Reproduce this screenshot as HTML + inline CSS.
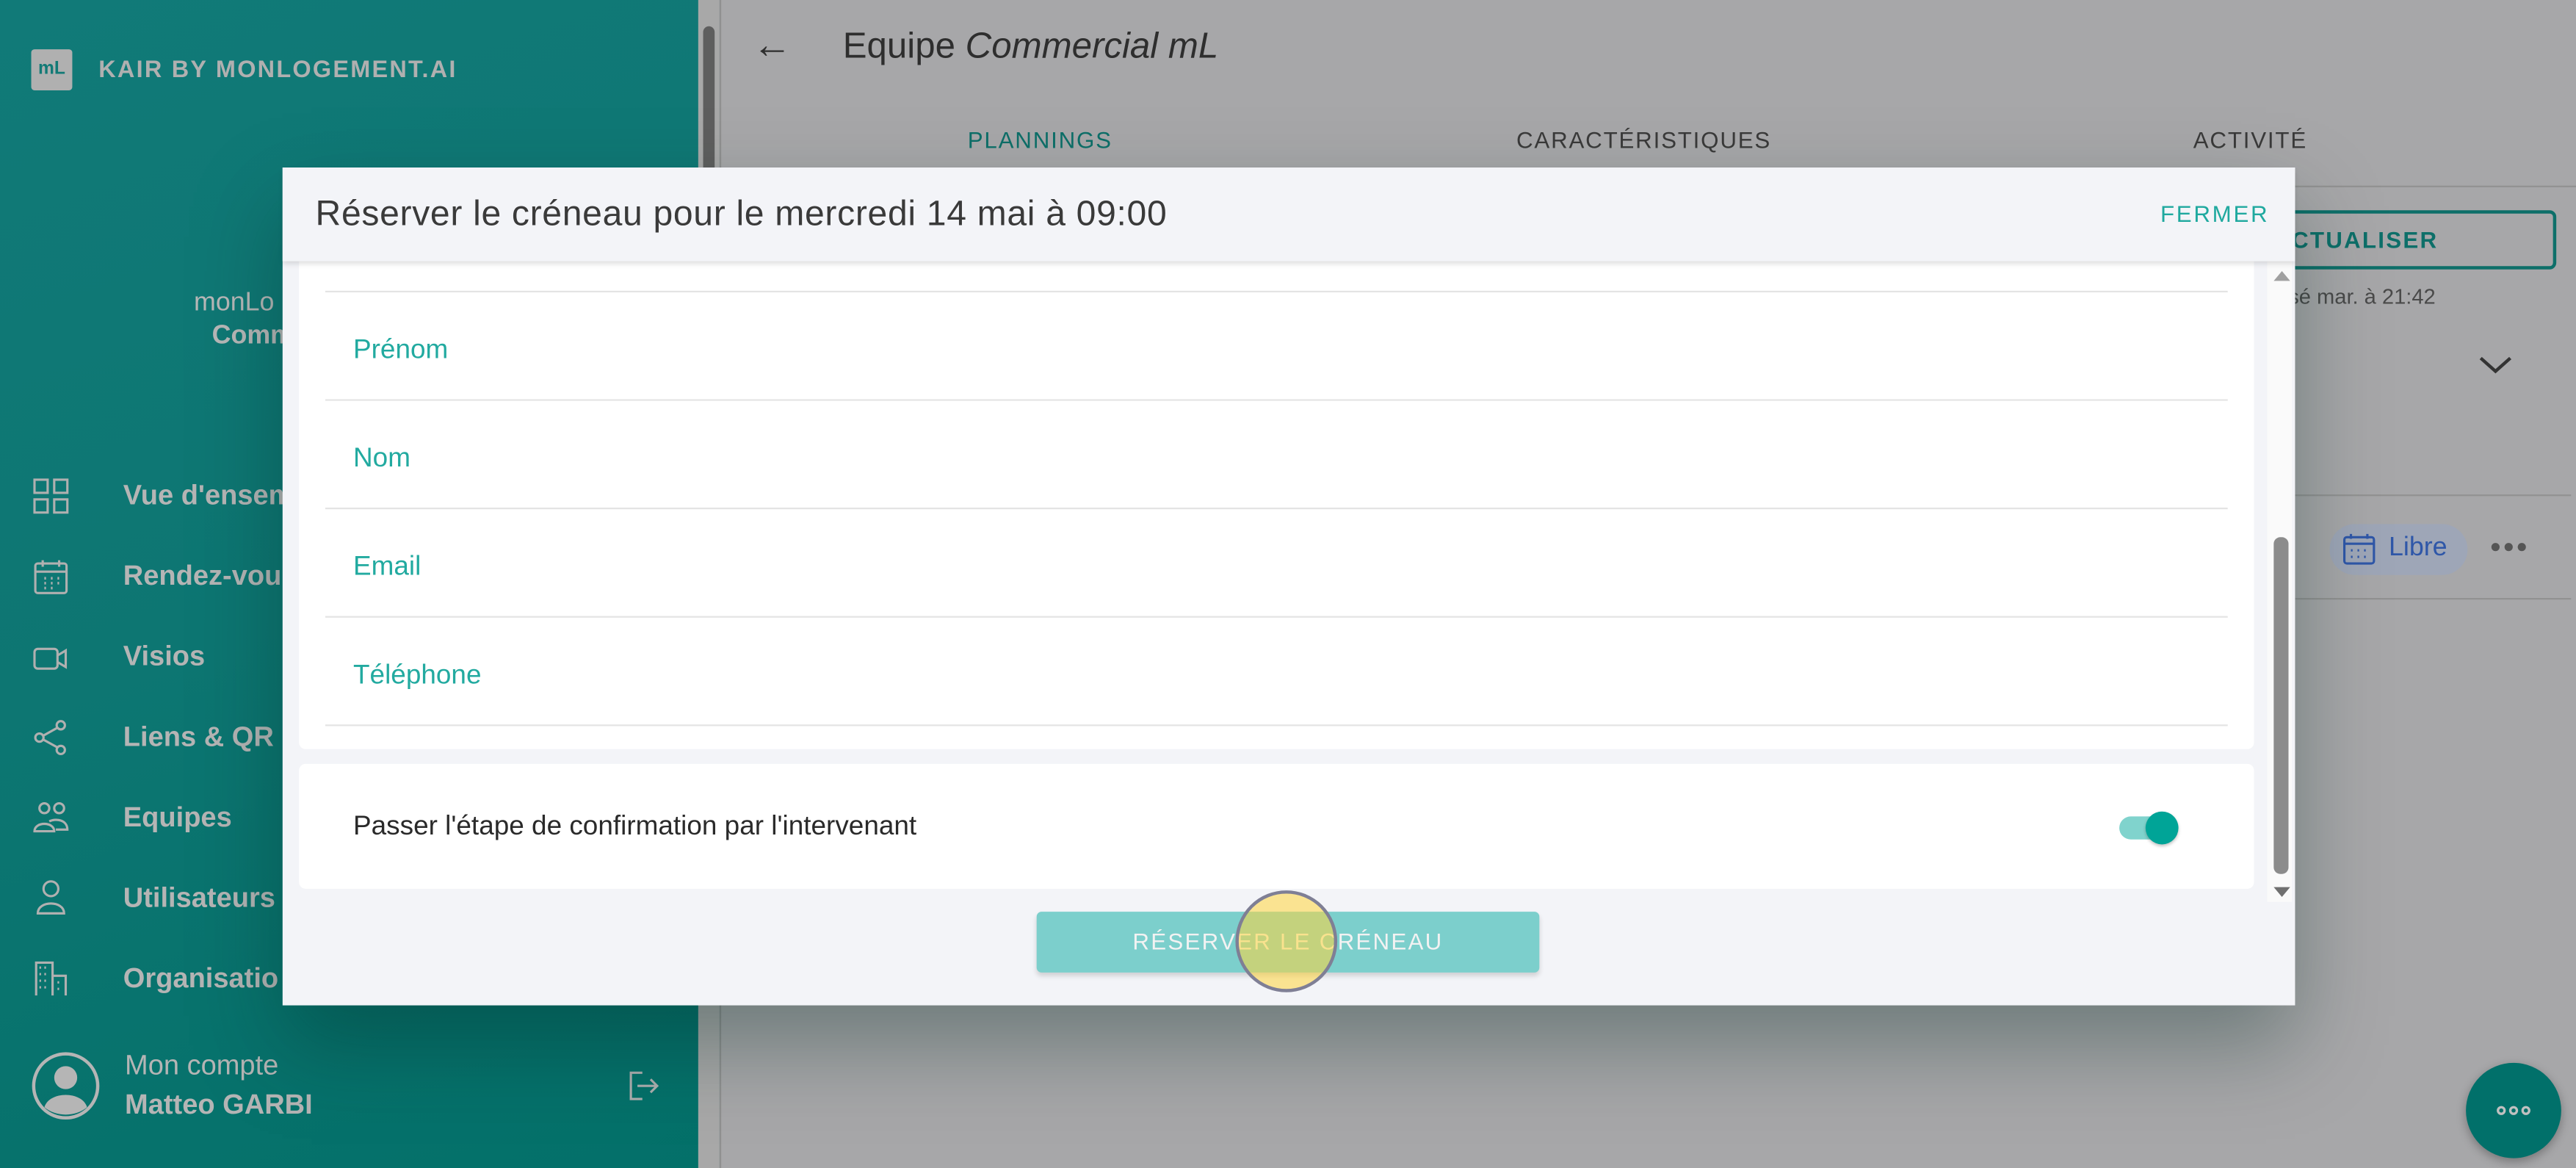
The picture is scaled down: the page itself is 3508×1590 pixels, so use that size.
<!DOCTYPE html>
<html><head><meta charset="utf-8"><style>
html,body{margin:0;padding:0;width:3508px;height:1590px;overflow:hidden;background:#a7a7a9;}
#w{position:absolute;left:0;top:0;width:1568px;height:711px;transform:scale(2.23725,2.23629);transform-origin:0 0;font-family:"Liberation Sans",sans-serif;}
.a{position:absolute;}
#side{left:0;top:0;width:438px;height:711px;background:linear-gradient(160deg,#117a78 0%,#0d7672 50%,#037069 100%);}
.nav{position:absolute;left:75px;font-weight:bold;font-size:17px;color:#b5b5b5;}
.ic{position:absolute;left:20px;width:22px;height:22px;}
.lab{position:absolute;left:215px;color:#22aaa0;font-size:16.5px;}
.ln{position:absolute;left:198px;width:1158px;height:1px;background:#e4e4e4;}
</style></head><body><div id="w">
<div id="side" class="a">
  <div class="a" style="left:19px;top:30px;width:25px;height:25px;background:#b0b0b0;border-radius:2px;color:#127a76;font-weight:bold;font-size:11px;text-align:center;line-height:25px;">mL</div>
  <div class="a" style="left:60px;top:35px;font-weight:bold;font-size:14.5px;color:#b0b0b0;letter-spacing:1px;">KAIR BY MONLOGEMENT.AI</div>
  <div class="a" style="left:118px;top:176px;font-size:16px;color:#b8b8b8;">monLo</div>
  <div class="a" style="left:129px;top:196px;font-size:16px;font-weight:bold;color:#b8b8b8;">Comm</div>
  <svg class="ic" style="top:291px" viewBox="0 0 22 22" fill="none" stroke="#b0b0b0" stroke-width="1.4"><rect x="1" y="1" width="8" height="8"/><rect x="13" y="1" width="8" height="8"/><rect x="1" y="13" width="8" height="8"/><rect x="13" y="13" width="8" height="8"/></svg>
  <div class="nav" style="top:292px">Vue d'ensem</div>
  <svg class="ic" style="top:340px" viewBox="0 0 22 22" fill="none" stroke="#b0b0b0" stroke-width="1.4"><rect x="1.5" y="3" width="19" height="18" rx="1.5"/><path d="M1.5 8h19M6 1v4M16 1v4"/><path d="M7 12h1M11 12h1M15 12h1M7 15h1M11 15h1M15 15h1M7 18h1M11 18h1" stroke-width="1.6"/></svg>
  <div class="nav" style="top:341px">Rendez-vou</div>
  <svg class="ic" style="top:390px" viewBox="0 0 22 22" fill="none" stroke="#b0b0b0" stroke-width="1.4"><rect x="1" y="5" width="14" height="12" rx="2"/><path d="M15 9l5-3v10l-5-3"/></svg>
  <div class="nav" style="top:390px">Visios</div>
  <svg class="ic" style="top:438px" viewBox="0 0 22 22" fill="none" stroke="#b0b0b0" stroke-width="1.4"><circle cx="17" cy="3.5" r="2.5"/><circle cx="4" cy="11" r="2.5"/><circle cx="17" cy="18.5" r="2.5"/><path d="M6 10l9-5M6 12l9 5"/></svg>
  <div class="nav" style="top:439px">Liens &amp; QR</div>
  <svg class="ic" style="top:487px" viewBox="0 0 22 22" fill="none" stroke="#b0b0b0" stroke-width="1.4"><circle cx="7" cy="5" r="3"/><circle cx="16" cy="5" r="3"/><path d="M1 19c0-6 12-6 12 0zM10 13c4-2 11-1 11 5h-7"/></svg>
  <div class="nav" style="top:488px">Equipes</div>
  <svg class="ic" style="top:535px" viewBox="0 0 22 22" fill="none" stroke="#b0b0b0" stroke-width="1.4"><circle cx="11" cy="6" r="4.5"/><path d="M3 21c0-8 16-8 16 0z"/></svg>
  <div class="nav" style="top:537px">Utilisateurs</div>
  <svg class="ic" style="top:584px" viewBox="0 0 22 22" fill="none" stroke="#b0b0b0" stroke-width="1.4"><path d="M2 22V2h10v20M12 10h8v12M4 5h1M7 5h1M4 9h1M7 9h1M4 13h1M7 13h1M4 17h1M7 17h1M15 14h1M15 18h1"/></svg>
  <div class="nav" style="top:586px">Organisatio</div>
  <svg class="a" style="left:19px;top:640px;width:42px;height:42px" viewBox="0 0 42 42"><circle cx="21" cy="21" r="19.5" fill="none" stroke="#b5b5b5" stroke-width="2"/><circle cx="21" cy="16" r="7" fill="#b5b5b5"/><path d="M8 34c3-10 23-10 26 0c-7 6-19 6-26 0z" fill="#b5b5b5"/></svg>
  <div class="a" style="left:76px;top:639px;font-size:17px;color:#b5b5b5;">Mon compte</div>
  <div class="a" style="left:76px;top:663px;font-size:17px;font-weight:bold;color:#b5b5b5;">Matteo GARBI</div>
  <svg class="a" style="left:382px;top:651px;width:20px;height:20px" viewBox="0 0 20 20" fill="none" stroke="#b0b0b0" stroke-width="1.4"><path d="M9 2H2v16h7M6 10h12M14 6l4 4-4 4"/></svg>
</div>
<div class="a" style="left:425px;top:0;width:13px;height:711px;background:#a8a8a8;"></div>
<div class="a" style="left:428px;top:16px;width:7px;height:90px;background:#5e5e5e;border-radius:4px;"></div>
<div class="a" style="left:438px;top:0;width:1130px;height:711px;background:#a7a7a9;border-left:1px solid #909090;"></div>
<div class="a" style="left:439px;top:113px;width:1129px;height:1px;background:#929292;"></div>
<div class="a" style="left:458px;top:14px;font-size:24px;color:#2e2e2e;">&#8592;</div>
<div class="a" style="left:513px;top:15px;font-size:22px;color:#2e2e2e;">Equipe <i>Commercial mL</i></div>
<div class="a" style="left:589px;top:77px;font-size:14px;color:#0d6f69;letter-spacing:0.8px;">PLANNINGS</div>
<div class="a" style="left:923px;top:77px;font-size:14px;color:#3a3a3a;letter-spacing:0.8px;">CARACTÉRISTIQUES</div>
<div class="a" style="left:1335px;top:77px;font-size:14px;color:#3a3a3a;letter-spacing:0.8px;">ACTIVITÉ</div>
<div class="a" style="left:1330px;top:128px;width:226px;height:36px;border:2px solid #0d6f69;border-radius:4px;box-sizing:border-box;"></div>
<div class="a" style="left:1395px;top:138px;font-size:14px;font-weight:bold;color:#0d6f69;letter-spacing:1px;">CTUALISER</div>
<div class="a" style="left:1390px;top:173px;font-size:13px;color:#4a4a4a;">isé mar. à 21:42</div>
<svg class="a" style="left:1508px;top:215px;width:22px;height:14px" viewBox="0 0 22 14" fill="none" stroke="#333" stroke-width="2"><path d="M2 3l9 8 9-8"/></svg>
<div class="a" style="left:1395px;top:301px;width:170px;height:1px;background:#929292;"></div>
<div class="a" style="left:1395px;top:364px;width:170px;height:1px;background:#929292;"></div>
<div class="a" style="left:1418px;top:319px;width:84px;height:31px;background:#9ea6b7;border-radius:16px;"></div>
<svg class="a" style="left:1426px;top:325px;width:20px;height:19px" viewBox="0 0 20 19" fill="none" stroke="#2f57a8" stroke-width="1.4"><rect x="1" y="2" width="18" height="16" rx="1.5"/><path d="M1 6h18M5 0v3M15 0v3M5 10h1M9 10h1M13 10h1M5 14h1M9 14h1M13 14h1"/></svg>
<div class="a" style="left:1454px;top:325px;font-size:16px;color:#2f57a8;">Libre</div>
<svg class="a" style="left:1516px;top:329px;width:22px;height:8px" viewBox="0 0 22 8" fill="#555"><circle cx="3" cy="4" r="2.5"/><circle cx="11" cy="4" r="2.5"/><circle cx="19" cy="4" r="2.5"/></svg>
<div class="a" style="left:1501px;top:647px;width:58px;height:58px;border-radius:50%;background:#01706a;box-shadow:0 2px 6px rgba(0,0,0,.3);"></div>
<svg class="a" style="left:1519px;top:672px;width:22px;height:8px" viewBox="0 0 22 8" fill="none" stroke="#c0c0c0" stroke-width="1.5"><circle cx="3.5" cy="4" r="2"/><circle cx="11" cy="4" r="2"/><circle cx="18.5" cy="4" r="2"/></svg>
<!-- modal -->
<div class="a" style="left:172px;top:102px;width:1225px;height:510px;background:#f3f4f8;box-shadow:0 24px 50px rgba(0,40,35,.35);">
  <div class="a" style="left:0;top:0;width:1225px;height:57px;background:#f3f4f8;box-shadow:0 2px 3px rgba(0,0,0,.12);z-index:2;"></div>
  <div class="a" style="left:20px;top:16px;font-size:21.5px;color:#3a3a3a;z-index:3;letter-spacing:0.3px;">Réserver le créneau pour le mercredi 14 mai à 09:00</div>
  <div class="a" style="left:1143px;top:20px;font-size:14px;color:#1fa99f;letter-spacing:1.2px;z-index:3;">FERMER</div>
</div>
<div class="a" style="left:182px;top:159px;width:1190px;height:297px;background:#fff;border-radius:0 0 4px 4px;"></div>
<div class="ln" style="top:177px"></div>
<div class="ln" style="top:243px"></div>
<div class="ln" style="top:309px"></div>
<div class="ln" style="top:375px"></div>
<div class="ln" style="top:441px"></div>
<div class="lab" style="top:204px">Prénom</div>
<div class="lab" style="top:270px">Nom</div>
<div class="lab" style="top:336px">Email</div>
<div class="lab" style="top:402px">Téléphone</div>
<div class="a" style="left:182px;top:465px;width:1190px;height:76px;background:#fff;border-radius:4px;"></div>
<div class="a" style="left:215px;top:494px;font-size:16.5px;color:#2a2a2a;">Passer l'étape de confirmation par l'intervenant</div>
<div class="a" style="left:1290px;top:497px;width:34px;height:14px;border-radius:7px;background:#80d3cd;"></div>
<div class="a" style="left:1306px;top:494px;width:20px;height:20px;border-radius:50%;background:#00a497;box-shadow:0 1px 2px rgba(0,0,0,.25);"></div>
<div class="a" style="left:1380px;top:159px;width:15px;height:390px;background:#fafafa;"></div>
<div class="a" style="left:1384px;top:165px;width:0;height:0;border-left:5px solid transparent;border-right:5px solid transparent;border-bottom:6px solid #a0a0a0;"></div>
<div class="a" style="left:1384px;top:540px;width:0;height:0;border-left:5px solid transparent;border-right:5px solid transparent;border-top:6px solid #707070;"></div>
<div class="a" style="left:1384px;top:327px;width:9px;height:205px;background:#8c8c8c;border-radius:4px;"></div>
<div class="a" style="left:631px;top:555px;width:306px;height:37px;background:#7ccfcc;border-radius:3px;box-shadow:0 2px 3px rgba(0,0,0,.15);"></div>
<div class="a" style="left:631px;top:565px;width:306px;text-align:center;font-size:14px;color:#f2f2f2;letter-spacing:1px;">RÉSERVER LE CRÉNEAU</div>
<div class="a" style="left:752px;top:542px;width:62px;height:62px;border-radius:50%;background:rgba(255,214,60,.55);border:2px solid #7f7f95;box-sizing:border-box;"></div>
</div></body></html>
